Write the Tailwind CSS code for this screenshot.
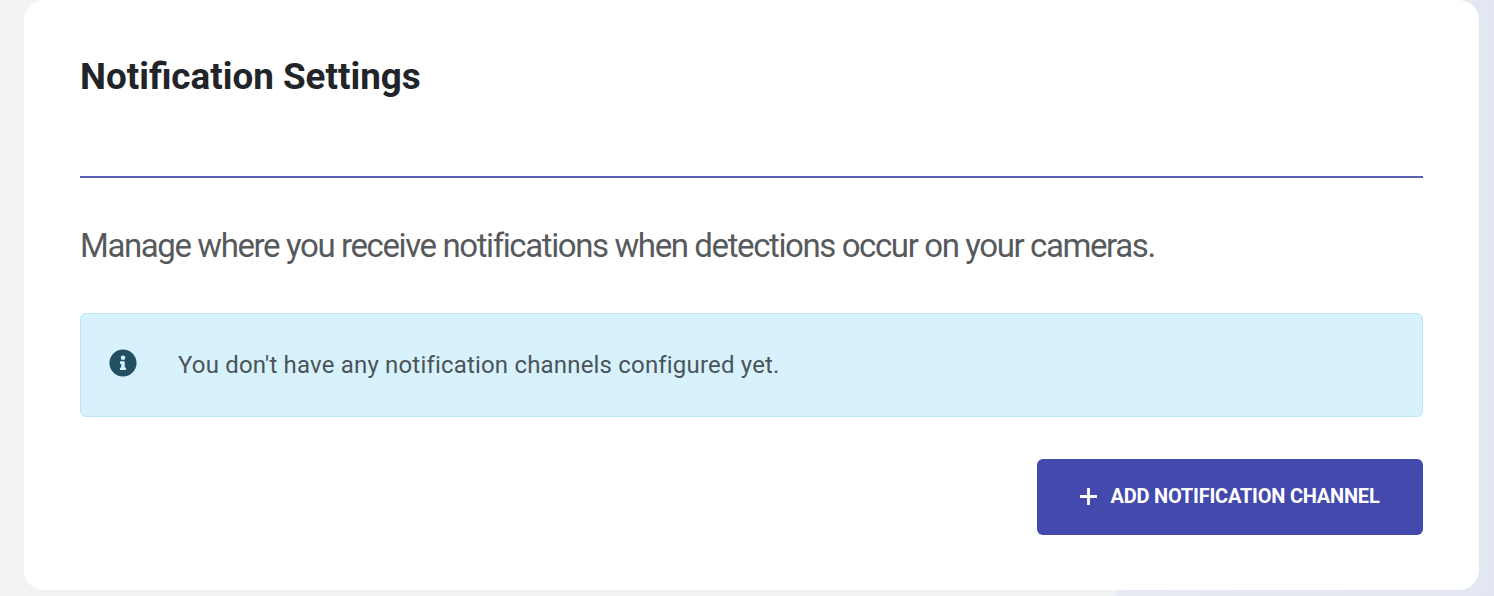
<!DOCTYPE html>
<html lang="en">
<head>
    <meta charset="UTF-8">
    <meta name="viewport" content="width=device-width, initial-scale=1.0">
    <title>Notification Settings</title>
    <script src="https://cdn.jsdelivr.net/npm/@tailwindcss/browser@4"></script>
</head>
<body class="h-[596px] overflow-hidden bg-[#f0f2f4] font-['Roboto',sans-serif]">

    <div class="h-[596px] overflow-hidden bg-[linear-gradient(90deg,#f0f2f4_0,#f0f2f4_1115px,#e6eaf2_1116px,#e3e7f1_100%)]">
        <!-- card, top edge is cut off by the screenshot -->
        <div class="ml-6 w-[1455px] h-[590px] rounded-[20px] bg-white px-14 pt-[54px]">
            <h1 class="text-[36.8px] leading-[46px] font-bold text-[#212529]">Notification Settings</h1>

            <hr class="mt-[76px] border-0 border-t-2 border-[#5c60b2]">

            <p class="mt-[44px] text-[33px] leading-[48px] tracking-[-1.4px] text-[#575a5d]">Manage where you receive notifications when detections occur on your cameras.</p>

            <!-- info alert -->
            <div class="mt-[43px] flex h-[104px] items-center rounded-md border border-[#bde6f3] bg-[#d7f2fc] pl-7">
                <svg class="h-7 w-7 shrink-0 -mt-[4px]" viewBox="0 0 512 512" fill="#234f63">
                    <path d="M256 8C119 8 8 119 8 256s111 248 248 248 248-111 248-248S393 8 256 8zm0 110a42 42 0 1 1 0 84 42 42 0 0 1 0-84zm56 254c0 7-5 12-12 12h-88c-7 0-12-5-12-12v-24c0-7 5-12 12-12h12v-64h-12c-7 0-12-5-12-12v-24c0-7 5-12 12-12h64c7 0 12 5 12 12v100h12c7 0 12 5 12 12v24z"/>
                </svg>
                <span class="ml-[41px] text-[24px] leading-9 tracking-[0.18px] text-[#4a5459]">You don't have any notification channels configured yet.</span>
            </div>

            <div class="mt-[42px] flex justify-end">
                <button class="flex h-[76px] w-[386px] items-center justify-center rounded-md bg-[#4349ad] pb-[2px] pr-[2px] text-[20px] font-bold tracking-[-0.22px] text-white">
                    <svg class="mr-[13px] h-[19px] w-[19px]" viewBox="0 0 19 19" fill="none" stroke="#fff" stroke-width="2.8">
                        <path d="M9.5 1v17M1 9.5h17"/>
                    </svg>
                    ADD NOTIFICATION CHANNEL
                </button>
            </div>
        </div>
    </div>

</body>
</html>
